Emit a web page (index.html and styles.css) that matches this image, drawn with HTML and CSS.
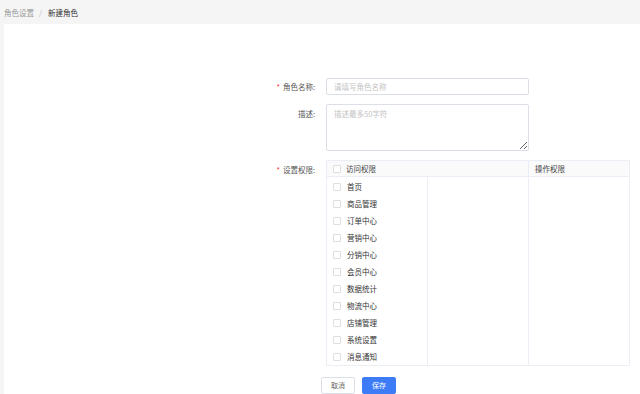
FILE: index.html
```html
<!DOCTYPE html>
<html lang="zh">
<head>
<meta charset="utf-8">
<link rel="stylesheet" href="styles.css">
</head>
<body>
<div class="crumb"><span class="crumb-link">角色设置</span><span class="crumb-sep">/</span><span class="crumb-cur">新建角色</span></div>
<div class="card">
  <div class="form">
    <div class="row">
      <label class="label"><span class="req">*</span>角色名称:</label>
      <input class="input" type="text" placeholder="请填写角色名称">
    </div>
    <div class="row row-top">
      <label class="label label-top">描述:</label>
      <textarea class="textarea" placeholder="描述最多50字符"></textarea>
    </div>
    <div class="row row-top">
      <label class="label label-perm"><span class="req">*</span>设置权限:</label>
      <table class="perm">
        <thead>
          <tr>
            <th class="c12" colspan="2"><span class="cb"></span>访问权限</th>
            <th class="c3">操作权限</th>
          </tr>
        </thead>
        <tbody>
          <tr>
            <td class="c1">
              <div class="item"><span class="cb"></span>首页</div>
              <div class="item"><span class="cb"></span>商品管理</div>
              <div class="item"><span class="cb"></span>订单中心</div>
              <div class="item"><span class="cb"></span>营销中心</div>
              <div class="item"><span class="cb"></span>分销中心</div>
              <div class="item"><span class="cb"></span>会员中心</div>
              <div class="item"><span class="cb"></span>数据统计</div>
              <div class="item"><span class="cb"></span>物流中心</div>
              <div class="item"><span class="cb"></span>店铺管理</div>
              <div class="item"><span class="cb"></span>系统设置</div>
              <div class="item"><span class="cb"></span>消息通知</div>
            </td>
            <td class="c2"></td>
            <td class="c3"></td>
          </tr>
        </tbody>
      </table>
    </div>
    <div class="actions">
      <button class="btn">取消</button>
      <button class="btn btn-primary">保存</button>
    </div>
  </div>
</div>
</body>
</html>
```
FILE: styles.css
```css
* { box-sizing: border-box; }
html, body { margin: 0; padding: 0; }
body {
  background: #f5f5f5;
  font-family: "Noto Sans CJK SC", "Noto Sans", sans-serif;
  font-size: 7.5px;
  color: #333;
  height: 394px;
  overflow: hidden;
}
.crumb {
  height: 24px;
  padding-left: 4px;
  display: flex;
  align-items: center;
  line-height: 1;
  padding-top: 1px;
}
.crumb-link { color: #999; }
.crumb-sep { color: #bbb; margin: 0 6px 0 5px; }
.crumb-cur { color: #333; }
.card {
  background: #fff;
  margin-left: 4px;
  height: 370px;
  padding-top: 54px;
}
.form { padding-left: 251px; }
.row {
  display: flex;
  align-items: center;
  margin-bottom: 9px;
}
.row-top { align-items: flex-start; }
.label {
  width: 71px;
  padding-right: 11px;
  text-align: right;
  color: #555;
  flex: none;
}
.label-top { padding-top: 4px; }
.label-perm { padding-top: 4px; }
.req { color: #f5222d; margin-right: 3px; }
.input, .textarea {
  width: 203px;
  border: 1px solid #dcdfe6;
  border-radius: 2px;
  font-family: inherit;
  font-size: 7.5px;
  padding: 0 7px;
  margin: 0;
  outline: none;
  color: #333;
}
.input { height: 17px; }
.textarea {
  height: 47px;
  padding-top: 3px;
  resize: vertical;
  display: block;
}
.input::placeholder, .textarea::placeholder { color: #c4c4c4; }
.row-top + .row-top { margin-top: 1px; margin-bottom: 11px; }
.perm {
  border-collapse: collapse;
  width: 304px;
  table-layout: fixed;
}
.perm th, .perm td {
  border: 1px solid #ebeef5;
  padding: 0;
  vertical-align: top;
  text-align: left;
  font-weight: normal;
}
.perm th {
  background: #fafafa;
  height: 16px;
  vertical-align: middle;
  color: #444;
}
.perm th.c12 { padding-left: 6px; }
.perm th.c3 { padding-left: 6px; }
.c1 { width: 101px; }
.c2 { width: 102px; }
.c3 { width: 101px; }
.perm th .cb { vertical-align: -1px; margin-right: 5px; }
.item {
  height: 17px;
  display: flex;
  align-items: center;
  padding-left: 6px;
  color: #333;
}
.item:first-child { margin-top: 1px; }
.cb {
  display: inline-block;
  width: 8px;
  height: 8px;
  border: 1px solid #dedede;
  border-radius: 1px;
  background: #fff;
  margin-right: 6px;
  flex: none;
}
.actions {
  display: flex;
  gap: 7px;
  padding-left: 66px;
}
.btn {
  height: 17px;
  width: 34px;
  border: 1px solid #dcdfe6;
  background: #fff;
  border-radius: 2px;
  font-family: inherit;
  font-size: 7px;
  color: #666;
  padding: 0;
  margin: 0;
  line-height: 1;
}
.btn-primary {
  background: #3d7bf7;
  border-color: #3d7bf7;
  color: #fff;
}
```
